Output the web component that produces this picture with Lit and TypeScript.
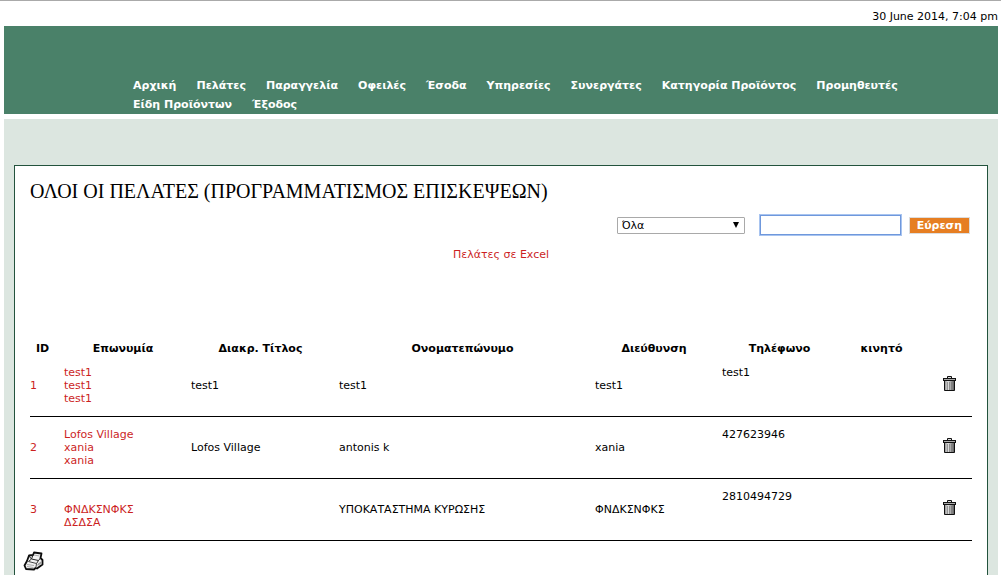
import { LitElement, html, css, svg } from "lit";
import { customElement, state } from "lit/decorators.js";

interface Customer {
  id: number;
  lines: string[];
  title: string;
  person: string;
  address: string;
  phone: string;
  mobile: string;
}

const MENU = [
  "Αρχική", "Πελάτες", "Παραγγελία", "Οφειλές", "Έσοδα", "Υπηρεσίες", "Συνεργάτες",
  "Κατηγορία Προϊόντος", "Προμηθευτές", "Είδη Προϊόντων", "Έξοδος",
];

const HEADINGS = ["ID", "Επωνυμία", "Διακρ. Τίτλος", "Ονοματεπώνυμο", "Διεύθυνση", "Τηλέφωνο", "κινητό"];

const CUSTOMERS: Customer[] = [
  { id: 1, lines: ["test1", "test1", "test1"], title: "test1", person: "test1", address: "test1", phone: "test1", mobile: "" },
  { id: 2, lines: ["Lofos Village", "xania", "xania"], title: "Lofos Village", person: "antonis k", address: "xania", phone: "427623946", mobile: "" },
  { id: 3, lines: ["", "ΦΝΔΚΣΝΦΚΣ", "ΔΣΔΣΑ"], title: "", person: "ΥΠΟΚΑΤΑΣΤΗΜΑ ΚΥΡΩΣΗΣ", address: "ΦΝΔΚΣΝΦΚΣ", phone: "2810494729", mobile: "" },
];

const trashIcon = html`<svg class="trash" viewBox="-1 0 14 16" width="14" height="16" aria-hidden="true">
  <defs><linearGradient id="can" x1="0" x2="1" y1="0" y2="0">
    <stop offset="0" stop-color="#888"/><stop offset=".35" stop-color="#e4e4e4"/><stop offset="1" stop-color="#555"/>
  </linearGradient></defs>
  ${svg`<path d="M4.500 2.500V.5h4v2" fill="#ddd" stroke="#111"/>
  <path d="M1.500 4.500h10v10h-10z" fill="url(#can)" stroke="#111"/>
  <rect x=".5" y="2.500" width="12" height="2" fill="#aaa" stroke="#111"/>
  <path d="M4.500 6v8M6.500 6v8M8.500 6v8" stroke="#777" stroke-opacity=".7" fill="none"/>`}
</svg>`;

const printerIcon = html`<svg class="printer" viewBox="0 0 22 22" width="22" height="22" aria-hidden="true">
  <path d="M6 5.500l4-.5 1-2.500 7.500 1-1 4.500 2 2v4.500l-5.500 4-1.500-.5-1.500 1.500-8-.5-1.500-3.500L4 11z" fill="#f2f2f2" stroke="#0c0c0c" stroke-width="1.800" stroke-linejoin="round"/>
  <path d="M10 5l-1.500 4 7 1.500 2-2.500M6 6l2.500 3-3 2.500M15.500 10.500l-2 3" fill="none" stroke="#222"/>
  <path d="M5.500 11.500l8 2-.5 3.500" fill="none" stroke="#444"/>
  <path d="M11 5l5.500 1M4 14.500l7 1M4 16.500l6.500 1" fill="none" stroke="#aaa"/>
  <path d="M14.500 14l3.500-2.500v2l-3.500 2.500z" fill="#999"/>
</svg>`;

@customElement("app-root")
export class AppRoot extends LitElement {
  static styles = css`
    :host {
      display: flex;
      flex-direction: column;
      box-sizing: border-box;
      min-height: 100vh;
      padding: 0 3px 0 4px;
      border-top: 1px solid #aaa;
      background: #fff;
      color: #000;
      font: 11px/13px "DejaVu Sans", Verdana, sans-serif;
    }
    a { color: #cc1f1f; text-decoration: none; }
    .date { padding: 9px 0 3px; text-align: right; }
    .top { padding: 50px 90px 0 129px; background: #4a8169; }
    .menu {
      display: flex;
      flex-wrap: wrap;
      column-gap: 20px;
      font-weight: bold;
      line-height: 19px;
    }
    .menu a { color: #fff; }
    .stage {
      display: flex;
      flex: 1;
      margin-top: 5px;
      padding: 46px 10px 0;
      background: #dce6e0;
    }
    .panel {
      flex: 1;
      padding: 0 15px;
      border: 1px solid #23533d;
      border-bottom: 0;
      background: #fff;
    }
    h1 {
      margin: 13px 0 0;
      font: 20px/24px "Liberation Serif", "Times New Roman", serif;
    }
    .search {
      display: flex;
      justify-content: flex-end;
      align-items: center;
      padding: 12px 2px 0 0;
    }
    .pick { position: relative; display: flex; margin-right: 15px; }
    .pick::after {
      content: "";
      position: absolute;
      right: 6px;
      top: 5px;
      border: solid transparent;
      border-width: 6px 3px 0;
      border-top-color: #000;
      pointer-events: none;
    }
    select, input, button { box-sizing: border-box; font: inherit; margin: 0; }
    select {
      appearance: none;
      width: 128px;
      height: 17px;
      padding: 0 4px;
      border: 1px solid #a9a9a9;
      border-radius: 1px;
      background: #fff;
      color: #000;
    }
    input {
      width: 141px;
      height: 20px;
      border: 1px solid #6f98dc;
      outline: 0;
      box-shadow: 0 0 0 1px #a8c4f0;
      margin-right: 8px;
    }
    button { cursor: pointer; }
    .find {
      height: 17px;
      padding: 0 7px;
      border: 1px solid #ddd;
      background: #e67e22;
      color: #fff;
      font-weight: bold;
    }
    .export { margin: 13px 0 81px; text-align: center; }
    table { width: 100%; table-layout: fixed; border-collapse: collapse; }
    th, td { padding: 0 9px 0 0; }
    td { padding: 11px 9px 11px 0; border-bottom: 1px solid #000; height: 39px; }
    .id { width: 25px; }
    .name, .address { width: 118px; }
    .title { width: 139px; }
    .phone { width: 115px; }
    .mobile { width: 71px; }
    .tools { width: 46px; padding-right: 0; text-align: center; }
    td.phone { vertical-align: top; }
    .line { display: block; min-height: 13px; }
    .icon { padding: 0; border: 0; background: none; }
    svg { display: block; }
    .print { display: block; margin: 9px 0 0 -7px; }
  `;

  @state() private query = "";

  render() {
    return html`
      <div class="date">30 June 2014, 7:04 pm</div>
      <header class="top">
        <nav class="menu">${MENU.map((item) => html`<a href="#">${item}</a>`)}</nav>
      </header>
      <main class="stage">
        <section class="panel">
          <h1>ΟΛΟΙ ΟΙ ΠΕΛΑΤΕΣ (ΠΡΟΓΡΑΜΜΑΤΙΣΜΟΣ ΕΠΙΣΚΕΨΕΩΝ)</h1>
          <form class="search" @submit=${(e: Event) => e.preventDefault()}>
            <label class="pick"><select aria-label="Πεδίο"><option>Όλα</option></select></label>
            <input type="text" aria-label="Εύρεση" .value=${this.query}
              @input=${(e: Event) => (this.query = (e.target as HTMLInputElement).value)} />
            <button class="find" type="submit">Εύρεση</button>
          </form>
          <div class="export"><a href="#">Πελάτες σε Excel</a></div>
          <table>
            <thead>
              <tr>
                ${["id", "name", "title", "person", "address", "phone", "mobile"].map(
                  (name, i) => html`<th class=${name} scope="col">${HEADINGS[i]}</th>`
                )}
                <th class="tools"></th>
              </tr>
            </thead>
            <tbody>
              ${CUSTOMERS.map((c) => html`<tr>
                <td><a href="#">${c.id}</a></td>
                <td><a href="#">${c.lines.map((l) => html`<span class="line">${l}</span>`)}</a></td>
                <td>${c.title}</td>
                <td>${c.person}</td>
                <td>${c.address}</td>
                <td class="phone">${c.phone}</td>
                <td>${c.mobile}</td>
                <td class="tools"><button class="icon" aria-label="Διαγραφή">${trashIcon}</button></td>
              </tr>`)}
            </tbody>
          </table>
          <button class="icon print" aria-label="Εκτύπωση">${printerIcon}</button>
        </section>
      </main>
    `;
  }
}
